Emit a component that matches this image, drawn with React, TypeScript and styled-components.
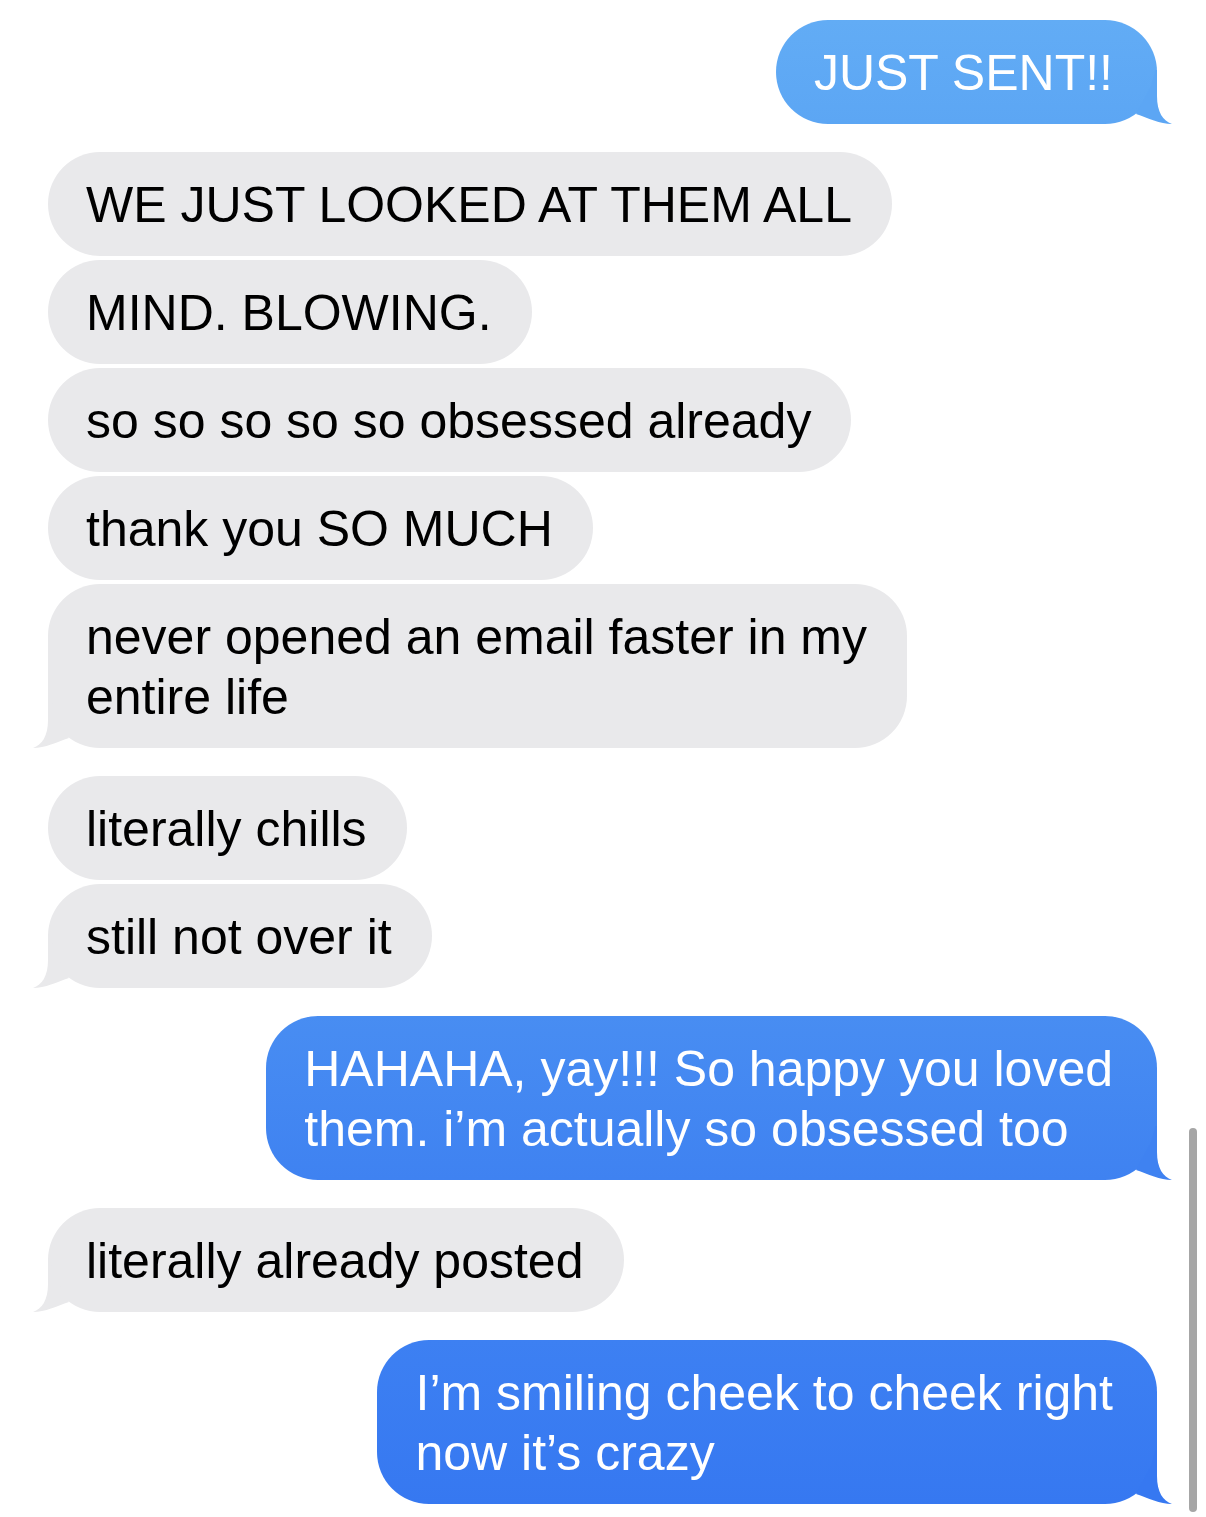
import styled, { createGlobalStyle } from 'styled-components'

const GREY = '#e9e9eb'

type Message = { lines: string[], top?: string, bottom?: string }
type Group = { me?: boolean, messages: Message[] }

const thread: Group[] = [
    { me: true, messages: [{ lines: ['JUST SENT!!'], top: '#62acf5', bottom: '#5ca6f4' }] },
    {
        messages: [
            { lines: ['WE JUST LOOKED AT THEM ALL'] },
            { lines: ['MIND. BLOWING.'] },
            { lines: ['so so so so so obsessed already'] },
            { lines: ['thank you SO MUCH'] },
            { lines: ['never opened an email faster in my', 'entire life'] },
        ]
    },
    {
        messages: [
            { lines: ['literally chills'] },
            { lines: ['still not over it'] },
        ]
    },
    {
        me: true, messages: [
            { lines: ['HAHAHA, yay!!! So happy you loved', 'them. i\u2019m actually so obsessed too'], top: '#488df2', bottom: '#3f82f1' },
        ]
    },
    { messages: [{ lines: ['literally already posted'] }] },
    {
        me: true, messages: [
            { lines: ['I\u2019m smiling cheek to cheek right', 'now it\u2019s crazy'], top: '#3d80f2', bottom: '#3678f1' },
        ]
    },
]

const GlobalStyle = createGlobalStyle`
    html, body {
        margin: 0;
        padding: 0;
        background: #fff;
    }
    body {
        font-family: "Liberation Sans", Arial, sans-serif;
        -webkit-font-smoothing: antialiased;
    }
`

const Screen = styled.div`
    position: relative;
    width: 1206px;
    height: 1517px;
    overflow: hidden;
    box-sizing: border-box;
    padding: 20px 49px 0 48px;
    background: #fff;
    display: flex;
    flex-direction: column;
    gap: 28px;
`

const Cluster = styled.div<{ $me?: boolean }>`
    display: flex;
    flex-direction: column;
    align-items: ${p => p.$me ? 'flex-end' : 'flex-start'};
    gap: 4px;
`

const Bubble = styled.div<{ $me?: boolean, $top?: string, $bottom?: string }>`
    position: relative;
    box-sizing: border-box;
    padding: 23px ${p => p.$me ? 44 : 40}px 21px 38px;
    border-radius: 52px;
    font-size: 50px;
    line-height: 60px;
    white-space: nowrap;
    color: ${p => p.$me ? '#fff' : '#000'};
    background: ${p => p.$me ? `linear-gradient(${p.$top}, ${p.$bottom})` : GREY};
`

const Tail = styled.svg<{ $me?: boolean }>`
    position: absolute;
    bottom: 0;
    width: 50px;
    height: 58px;
    ${p => p.$me ? 'right: -15px; transform: scaleX(-1);' : 'left: -15px;'}
`

const ScrollIndicator = styled.div`
    position: absolute;
    top: 1128px;
    right: 9px;
    width: 8px;
    height: 384px;
    border-radius: 4px;
    background: #a6a6a6;
`

// tail sits on the bottom corner, bubble edge at x=15 of the viewBox
function BubbleTail({ me, color }: { me?: boolean, color: string }) {
    return <Tail $me={me} viewBox='0 0 50 58'>
        <path d='M15 4 L15 30 C15 46 9 55 0 58 C12 58 24 52 36 48 L21 20 L16.5 4 Z' fill={color} />
    </Tail>
}

export default function App() {
    return <>
        <GlobalStyle />
        <Screen>
            {thread.map((group, gi) => {
                return <Cluster key={gi} $me={group.me}>
                    {group.messages.map((msg, mi) => {
                        const last = mi === group.messages.length - 1
                        return <Bubble key={mi} $me={group.me} $top={msg.top} $bottom={msg.bottom}>
                            {msg.lines.map((line, li) => <div key={li}>{line}</div>)}
                            {last && <BubbleTail me={group.me} color={group.me ? msg.bottom! : GREY} />}
                        </Bubble>
                    })}
                </Cluster>
            })}
            <ScrollIndicator />
        </Screen>
    </>
}
